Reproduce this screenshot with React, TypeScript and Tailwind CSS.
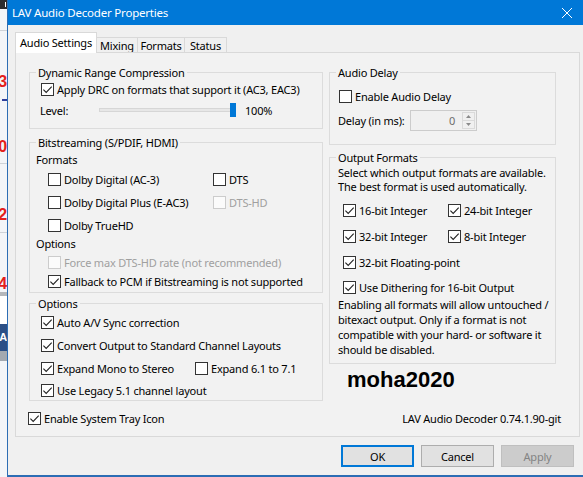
import type { ReactNode } from "react";

const UI = "font-['Segoe_UI','Noto_Sans',sans-serif] text-[11px] leading-[15px] tracking-[-0.2px]";

function DesktopEdge() {
  const digit = "flex h-4 justify-end overflow-hidden text-[16px] leading-4 font-bold text-[#e3211b] font-['Liberation_Sans',sans-serif]";
  return (
    <div className="flex w-[7px] shrink-0 flex-col bg-[#f3f5f8]">
      <div className="flex h-[9px] items-center justify-end bg-[#2d2d30] pr-px">
        <span className="h-[5px] w-px bg-white" />
      </div>
      <div className="h-[21px]" />
      <div className="h-px bg-[#cfd3d8]" />
      <div className="h-[43px]" />
      <div className={digit}>3</div>
      <div className="h-[9px]" />
      <div className="ml-[2px] h-[2px] w-[5px] bg-[#2f3f9c]" />
      <div className="h-[38px]" />
      <div className={digit}>0</div>
      <div className="h-[8px]" />
      <div className="h-px bg-[#cfd3d8]" />
      <div className="h-[43px]" />
      <div className={digit}>2</div>
      <div className="h-[9px]" />
      <div className="h-px bg-[#cfd3d8]" />
      <div className="h-[43px]" />
      <div className={digit}>4</div>
      <div className="h-[4px] bg-[#b4b7bb]" />
      <div className="h-[28px] bg-white" />
      <div className="flex h-[27px] items-center justify-end overflow-hidden bg-[#2b4f86] text-[11px] font-bold text-white font-['Liberation_Sans',sans-serif]">
        A
      </div>
      <div className="h-[10px] bg-[#a3a9b0]" />
      <div className="flex-1" />
    </div>
  );
}

function CheckBox({ checked, disabled }: { checked?: boolean; disabled?: boolean }) {
  return (
    <span
      className={`flex h-[13px] w-[13px] shrink-0 items-center justify-center border ${
        disabled ? "border-[#cccccc] bg-[#fbfbfb]" : "border-[#333333] bg-white"
      }`}
    >
      {checked && (
        <svg width="11" height="11" viewBox="0 0 11 11" fill="none">
          <path d="M1.4 5.6 4.2 8.4 9.7 2.7" stroke="#222222" strokeWidth="1.1" />
        </svg>
      )}
    </span>
  );
}

function Check({
  label,
  checked = false,
  disabled = false,
  className = "",
}: {
  label: string;
  checked?: boolean;
  disabled?: boolean;
  className?: string;
}) {
  return (
    <div className={`flex h-4 items-center ${className}`}>
      <CheckBox checked={checked} disabled={disabled} />
      <span className={`ml-[3px] whitespace-nowrap ${disabled ? "text-[#a0a0a0]" : "text-black"}`}>{label}</span>
    </div>
  );
}

function Group({ title, className, children }: { title: string; className: string; children: ReactNode }) {
  return (
    <fieldset className={`shrink-0 border border-[#dcdcdc] ${className}`}>
      <legend className="ml-[6px] px-[2px] leading-[15px]">{title}</legend>
      {children}
    </fieldset>
  );
}

function Slider() {
  return (
    <div className="relative flex h-4 w-[137px] items-center">
      <div className="h-[4px] w-full border border-[#d6d6d6] bg-[#e7e7e7]" />
      <div className="absolute right-0 top-[1px] h-[14px] w-[6px] bg-[#0078d7]" />
    </div>
  );
}

function SpinBox() {
  return (
    <div className="flex h-[21px] w-[67px] border border-[#cccccc] bg-[#f0f0f0]">
      <div className="flex flex-1 items-center justify-end pr-[7px] text-[#6d6d6d]">0</div>
      <div className="my-px mr-px flex w-[13px] flex-col border border-[#dadada]">
        <div className="flex flex-1 items-center justify-center border-b border-[#dadada]">
          <svg width="5" height="3" viewBox="0 0 5 3">
            <path d="M0 3 2.5 0 5 3Z" fill="#8a8a8a" />
          </svg>
        </div>
        <div className="flex flex-1 items-center justify-center">
          <svg width="5" height="3" viewBox="0 0 5 3">
            <path d="M0 0 2.5 3 5 0Z" fill="#8a8a8a" />
          </svg>
        </div>
      </div>
    </div>
  );
}

function LeftColumn() {
  return (
    <div className="flex w-[294px] flex-col">
      <Group title="Dynamic Range Compression" className="h-[64px]">
        <Check className="ml-[11px] mt-px" label="Apply DRC on formats that support it (AC3, EAC3)" checked />
        <div className="ml-[10px] mt-[5px] flex h-4 items-center">
          <span className="w-[59px]">Level:</span>
          <Slider />
          <span className="ml-[9px]">100%</span>
        </div>
      </Group>

      <Group title="Bitstreaming (S/PDIF, HDMI)" className="mt-[6px] h-[158px]">
        <div className="ml-[6px] mt-[2px]">Formats</div>
        <div className="ml-[18px] mt-[4px] grid grid-cols-[165px_1fr] gap-y-[7px]">
          <Check label="Dolby Digital (AC-3)" />
          <Check label="DTS" />
          <Check label="Dolby Digital Plus (E-AC3)" />
          <Check label="DTS-HD" disabled />
          <Check label="Dolby TrueHD" />
        </div>
        <div className="ml-[6px] mt-[3px]">Options</div>
        <Check className="ml-[18px] mt-[3px]" label="Force max DTS-HD rate (not recommended)" disabled />
        <Check className="ml-[18px] mt-[3px]" label="Fallback to PCM if Bitstreaming is not supported" checked />
      </Group>

      <Group title="Options" className="mt-[3px] h-[105px]">
        <Check className="ml-[11px] mt-[3px]" label="Auto A/V Sync correction" checked />
        <Check className="ml-[11px] mt-[7px]" label="Convert Output to Standard Channel Layouts" checked />
        <div className="ml-[11px] mt-[7px] flex">
          <Check className="w-[154px]" label="Expand Mono to Stereo" checked />
          <Check label="Expand 6.1 to 7.1" />
        </div>
        <Check className="ml-[11px] mt-[6px]" label="Use Legacy 5.1 channel layout" checked />
      </Group>
    </div>
  );
}

function RightColumn() {
  return (
    <div className="flex w-[227px] flex-col">
      <Group title="Audio Delay" className="h-[80px]">
        <Check className="ml-[9px] mt-[8px]" label="Enable Audio Delay" />
        <div className="ml-[8px] mt-[6px] flex items-center">
          <span className="w-[72px]">Delay (in ms):</span>
          <SpinBox />
        </div>
      </Group>

      <Group title="Output Formats" className="mt-[5px] h-[214px]">
        <p className="ml-[8px] mt-px whitespace-nowrap leading-[14px]">
          Select which output formats are available.
          <br />
          The best format is used automatically.
        </p>
        <div className="ml-[13px] mt-[8px] grid grid-cols-[105px_1fr] gap-y-[10px]">
          <Check label="16-bit Integer" checked />
          <Check label="24-bit Integer" checked />
          <Check label="32-bit Integer" checked />
          <Check label="8-bit Integer" checked />
        </div>
        <Check className="ml-[13px] mt-[10px]" label="32-bit Floating-point" checked />
        <Check className="ml-[13px] mt-[9px]" label="Use Dithering for 16-bit Output" checked />
        <p className="ml-[8px] mt-[2px] whitespace-nowrap leading-[15px]">
          Enabling all formats will allow untouched /
          <br />
          bitexact output. Only if a format is not
          <br />
          compatible with your hard- or software it
          <br />
          should be disabled.
        </p>
      </Group>

      <div className="ml-[18px] mt-[3px] text-[22px] leading-[25px] font-bold tracking-normal text-black font-['Liberation_Sans',sans-serif]">
        moha2020
      </div>
    </div>
  );
}

function Tab({ label, width, active }: { label: string; width: string; active?: boolean }) {
  return active ? (
    <div className={`relative z-10 -mb-px flex h-[21px] items-center justify-center border border-b-0 border-[#d9d9d9] bg-white pb-[2px] ${width}`}>
      {label}
    </div>
  ) : (
    <div className={`flex h-[15px] items-center justify-center border border-b-0 border-l-0 border-[#d9d9d9] bg-[#f0f0f0] ${width}`}>
      {label}
    </div>
  );
}

function Button({ label, primary, disabled }: { label: string; primary?: boolean; disabled?: boolean }) {
  const look = primary
    ? "border-2 border-[#0078d7] bg-[#e1e1e1] text-black"
    : disabled
      ? "border border-[#bfbfbf] bg-[#cccccc] text-[#838383]"
      : "border border-[#adadad] bg-[#e1e1e1] text-black";
  return <div className={`flex h-[22px] w-[73px] items-center justify-center ${look}`}>{label}</div>;
}

export default function App() {
  return (
    <div className={`flex h-[477px] w-[583px] overflow-hidden bg-[#f3f5f8] text-black ${UI}`}>
      <DesktopEdge />
      <div className="flex flex-1 flex-col border-b-2 border-l border-[#2c6db4] bg-[#f0f0f0]">
        <div className="flex h-[25px] shrink-0 items-center justify-between bg-[#0078d7] pl-[4px] pr-[11px] text-[11.5px] text-white">
          <span>LAV Audio Decoder Properties</span>
          <svg width="10" height="10" viewBox="0 0 10 10" stroke="white" strokeWidth="1">
            <path d="M0 0 10 10M10 0 0 10" />
          </svg>
        </div>

        <div className="flex flex-1 flex-col pl-[7px] pt-[7px]">
          <div className="flex h-[20px] items-end">
            <Tab label="Audio Settings" width="w-[82px]" active />
            <Tab label="Mixing" width="w-[41px]" />
            <Tab label="Formats" width="w-[47px]" />
            <Tab label="Status" width="w-[42px]" />
          </div>

          <div className="flex h-[385px] w-[565px] flex-col border border-[#d9d9d9] bg-[#f2f2f2] pl-[13px] pt-[12px]">
            <div className="flex gap-[6px]">
              <LeftColumn />
              <RightColumn />
            </div>
            <div className="mt-[9px] flex h-4 items-center justify-between pr-[18px]">
              <Check label="Enable System Tray Icon" checked className="-ml-px" />
              <span>LAV Audio Decoder 0.74.1.90-git</span>
            </div>
          </div>

          <div className="ml-[326px] mt-[8px] flex gap-[7px]">
            <Button label="OK" primary />
            <Button label="Cancel" />
            <Button label="Apply" disabled />
          </div>
        </div>
      </div>
    </div>
  );
}
